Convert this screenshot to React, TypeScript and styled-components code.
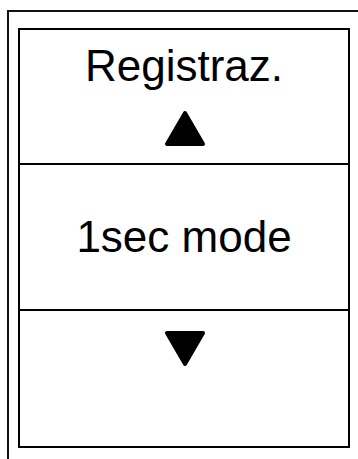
import styled, { createGlobalStyle } from 'styled-components';

const GlobalStyle = createGlobalStyle`
  html, body {
    margin: 0;
    padding: 0;
    background: #ffffff;
    overflow: hidden;
  }
  body {
    font-family: 'Liberation Sans', Arial, sans-serif;
    color: #000;
  }
`;

const Screen = styled.div`
  width: 358px;
  height: 459px;
  overflow: hidden;
  background: #fff;
`;

const OuterFrame = styled.div`
  margin: 10px 0 0 7px;
  height: 460px;
  border-left: 2px solid #111;
  border-top: 2px solid #111;
  padding: 16px 0 0 9px;
  box-sizing: border-box;
`;

const Panel = styled.div`
  width: 332px;
  height: 420px;
  box-sizing: border-box;
  border: 2px solid #000;
  display: flex;
  flex-direction: column;
`;

const Section = styled.div<{ $height: number; $top?: number; $center?: boolean }>`
  height: ${p => p.$height}px;
  flex: none;
  display: flex;
  flex-direction: column;
  align-items: center;
  justify-content: ${p => (p.$center ? 'center' : 'flex-start')};
  padding-top: ${p => p.$top ?? 0}px;
  box-sizing: border-box;
`;

const Divider = styled.div`
  height: 2px;
  flex: none;
  background: #000;
`;

const Label = styled.div<{ $gap?: number }>`
  font-size: 44px;
  line-height: 50px;
  white-space: nowrap;
  margin-bottom: ${p => p.$gap ?? 0}px;
`;

const Arrow = styled.svg`
  display: block;
  width: 42px;
  height: 37px;
  margin-left: 2px;
`;

function Triangle({ down }: { down?: boolean }) {
  const d = down ? 'M3 3 L39 3 L21 34 Z' : 'M21 3 L39 34 L3 34 Z';
  return (
    <Arrow viewBox="0 0 42 37">
      <path d={d} fill="#000" stroke="#000" strokeWidth={4} strokeLinejoin="round" />
    </Arrow>
  );
}

function App() {
  return (
    <Screen>
      <GlobalStyle />
      <OuterFrame>
        <Panel>
          <Section $height={133} $top={11}>
            <Label $gap={19}>Registraz.</Label>
            <Triangle />
          </Section>
          <Divider />
          <Section $height={144} $center>
            <Label>1sec mode</Label>
          </Section>
          <Divider />
          <Section $height={135} $top={19}>
            <Triangle down />
          </Section>
        </Panel>
      </OuterFrame>
    </Screen>
  );
}

export default App;
